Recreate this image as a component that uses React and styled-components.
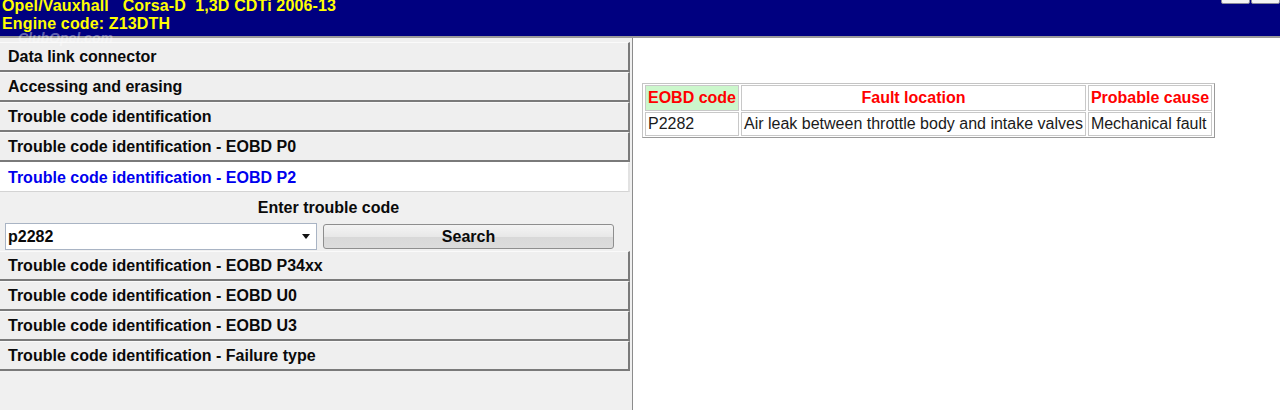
import React from 'react';
import styled, { createGlobalStyle } from 'styled-components';

const Global = createGlobalStyle`
  html, body {
    margin: 0;
    padding: 0;
    background: #fff;
    font-family: "Liberation Sans", Arial, sans-serif;
  }
`;

const Page = styled.div`
  width: 1280px;
  height: 410px;
  overflow: hidden;
  display: flex;
  flex-direction: column;
  position: relative;
`;

const Header = styled.div`
  height: 38px;
  background: #000080;
  border-bottom: 2px solid #9a9a9a;
  display: flex;
  flex-direction: column;
  justify-content: flex-end;
  padding: 0 0 3px 2px;
  box-sizing: border-box;
  overflow: hidden;
  position: relative;
  flex-shrink: 0;
`;

const HeaderLine = styled.div`
  color: #ffff00;
  font-size: 16px;
  font-weight: bold;
  line-height: 18px;
  letter-spacing: 0.15px;
  white-space: pre;
`;

const WinButton = styled.div`
  position: absolute;
  top: -3px;
  left: ${p => p.x}px;
  width: 27px;
  height: 5px;
  background: #f4f4f4;
  border: 1px solid #8a8a9a;
  border-radius: 2px;
`;

const Watermark = styled.div`
  position: absolute;
  left: 18px;
  top: 30px;
  font-size: 14px;
  line-height: 16px;
  font-weight: bold;
  font-style: italic;
  color: rgba(255, 255, 255, 0.4);
  pointer-events: none;
`;

const Main = styled.div`
  flex: 1;
  display: flex;
  min-height: 0;
`;

const LeftPanel = styled.div`
  width: 633px;
  flex-shrink: 0;
  background: #f0f0f0;
  border-right: 1px solid #8c8c8c;
  box-sizing: border-box;
  padding: 4px 2px 0 0;
  display: flex;
  flex-direction: column;
`;

const MenuItem = styled.div`
  height: 30px;
  box-sizing: border-box;
  display: flex;
  align-items: center;
  padding: 1px 0 0 8px;
  font-size: 16px;
  font-weight: bold;
  color: ${p => (p.active ? '#0000ee' : '#0a0a0a')};
  background: ${p => (p.active ? '#ffffff' : '#efefef')};
  border-top: 1px solid ${p => (p.active ? '#ffffff' : '#fafafa')};
  border-right: 2px solid ${p => (p.active ? '#e2e2e2' : '#7a7a7a')};
  border-bottom: ${p => (p.active ? '1px solid #d4d4d4' : '2px solid #7a7a7a')};
`;

const SearchBox = styled.div`
  height: 59px;
  box-sizing: border-box;
  display: flex;
  flex-direction: column;
  padding: 0 0 0 5px;
`;

const SearchTitle = styled.div`
  height: 31px;
  display: flex;
  align-items: center;
  justify-content: center;
  padding-left: 22px;
  font-size: 16px;
  font-weight: bold;
  color: #0a0a0a;
`;

const SearchRow = styled.div`
  display: flex;
  align-items: center;
  gap: 6px;
`;

const Combo = styled.div`
  width: 312px;
  height: 27px;
  box-sizing: border-box;
  background: #fff;
  border: 1px solid #a9b4c4;
  display: flex;
  align-items: center;
  justify-content: space-between;
  padding: 0 6px 0 2px;
  font-size: 16px;
  font-weight: bold;
  color: #0a0a0a;
`;

const Arrow = styled.span`
  width: 0;
  height: 0;
  border-left: 4px solid transparent;
  border-right: 4px solid transparent;
  border-top: 5px solid #111;
`;

const SearchButton = styled.div`
  width: 291px;
  height: 25px;
  box-sizing: border-box;
  border: 1px solid #8e8e8e;
  border-radius: 3px;
  background: linear-gradient(#f4f4f4 0%, #e8e8e8 50%, #d8d8d8 51%, #dcdcdc 100%);
  display: flex;
  align-items: center;
  justify-content: center;
  font-size: 16px;
  font-weight: bold;
  color: #0a0a0a;
`;

const RightPanel = styled.div`
  flex: 1;
  background: #fff;
  padding: 45px 0 0 9px;
`;

const Table = styled.table`
  border: 1px solid #c4c4c4;
  border-right-color: #9a9a9a;
  border-bottom-color: #9a9a9a;
  border-spacing: 2px 1px;
  font-size: 16px;
`;

const Th = styled.th`
  border: 1px solid #c8c8c8;
  padding: 3px 2px;
  line-height: 18px;
  font-weight: bold;
  color: #ff0000;
  background: ${p => p.bg || '#fff'};
  text-align: ${p => p.align || 'left'};
  white-space: nowrap;
`;

const Td = styled.td`
  border: 1px solid #c8c8c8;
  padding: 2px 2px;
  line-height: 18px;
  color: #1a1a1a;
  white-space: nowrap;
`;

const topItems = [
  'Data link connector',
  'Accessing and erasing',
  'Trouble code identification',
  'Trouble code identification - EOBD P0',
];

const bottomItems = [
  'Trouble code identification - EOBD P34xx',
  'Trouble code identification - EOBD U0',
  'Trouble code identification - EOBD U3',
  'Trouble code identification - Failure type',
];

export default function App() {
  return (
    <Page>
      <Global />
      <Header>
        <HeaderLine>{'Opel/Vauxhall   Corsa-D  1,3D CDTi 2006-13'}</HeaderLine>
        <HeaderLine>Engine code: Z13DTH</HeaderLine>
        <WinButton x={1221} />
        <WinButton x={1251} />
      </Header>
      <Main>
        <LeftPanel>
          {topItems.map(t => (
            <MenuItem key={t}>{t}</MenuItem>
          ))}
          <MenuItem active>Trouble code identification - EOBD P2</MenuItem>
          <SearchBox>
            <SearchTitle>Enter trouble code</SearchTitle>
            <SearchRow>
              <Combo>
                p2282
                <Arrow />
              </Combo>
              <SearchButton>Search</SearchButton>
            </SearchRow>
          </SearchBox>
          {bottomItems.map(t => (
            <MenuItem key={t}>{t}</MenuItem>
          ))}
        </LeftPanel>
        <RightPanel>
          <Table>
            <tbody>
              <tr>
                <Th bg="#ccf7cc">EOBD code</Th>
                <Th align="center">Fault location</Th>
                <Th>Probable cause</Th>
              </tr>
              <tr>
                <Td>P2282</Td>
                <Td>Air leak between throttle body and intake valves</Td>
                <Td>Mechanical fault</Td>
              </tr>
            </tbody>
          </Table>
        </RightPanel>
      </Main>
      <Watermark>ClubOpel.com</Watermark>
    </Page>
  );
}
